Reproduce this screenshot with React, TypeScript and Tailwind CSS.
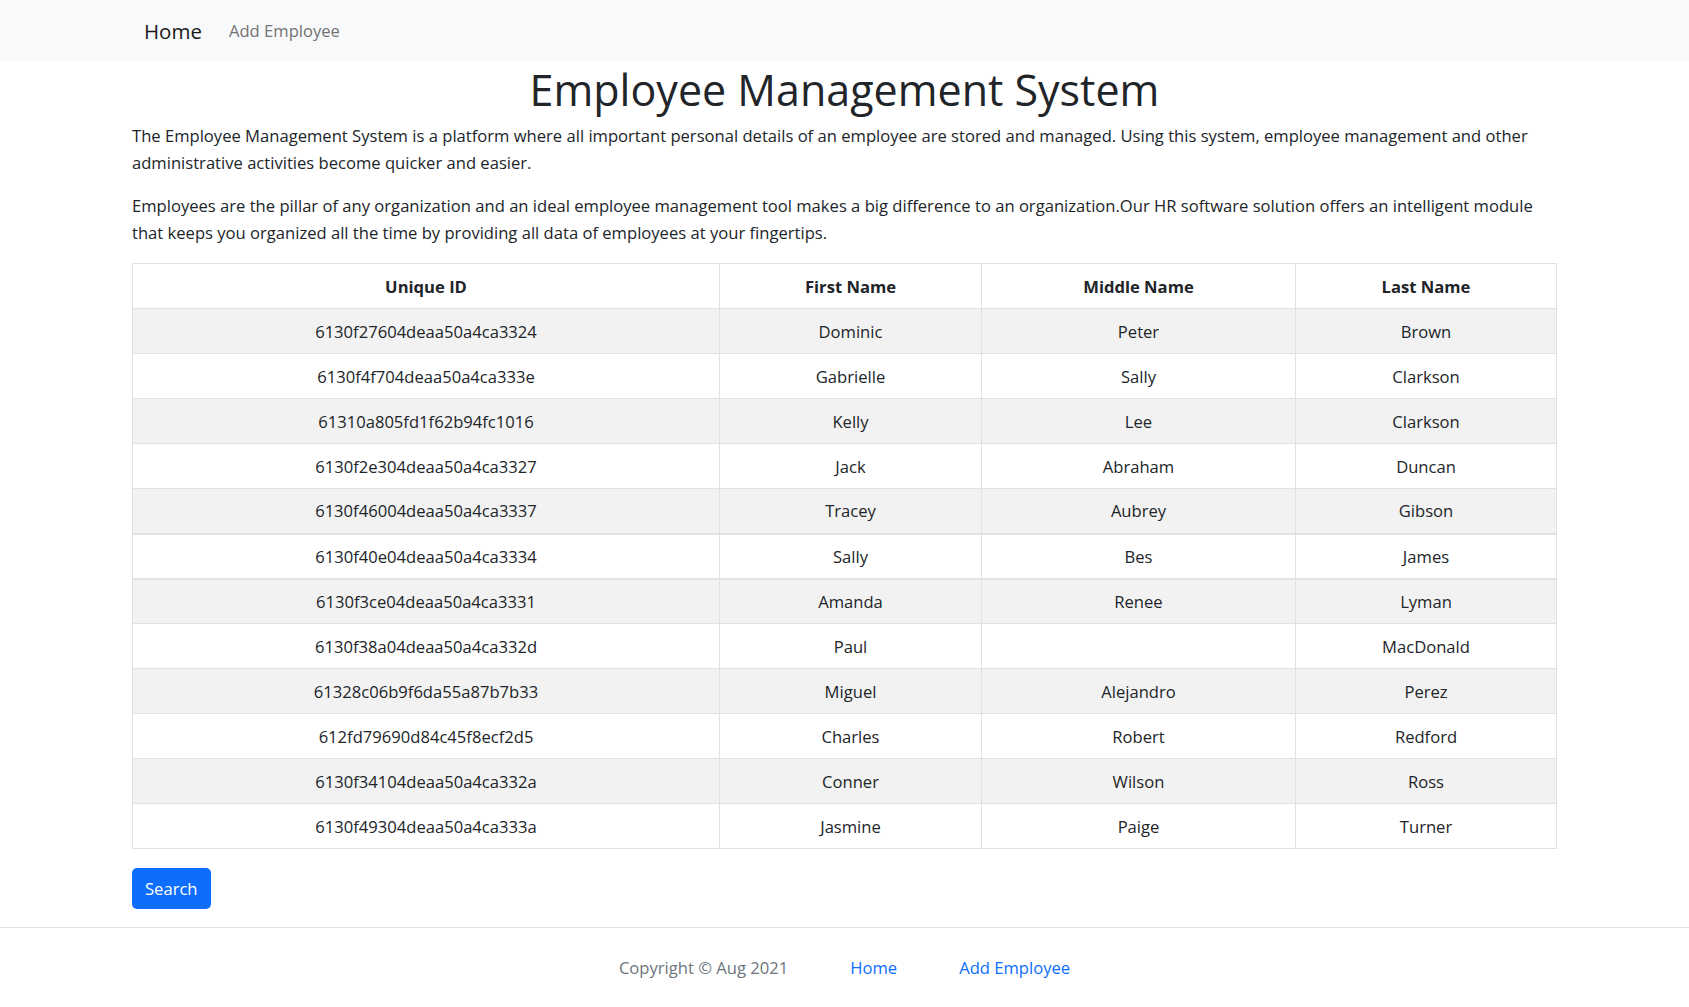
import { ReactNode } from 'react'

const ROWS = [
  ['6130f27604deaa50a4ca3324', 'Dominic', 'Peter', 'Brown'],
  ['6130f4f704deaa50a4ca333e', 'Gabrielle', 'Sally', 'Clarkson'],
  ['61310a805fd1f62b94fc1016', 'Kelly', 'Lee', 'Clarkson'],
  ['6130f2e304deaa50a4ca3327', 'Jack', 'Abraham', 'Duncan'],
  ['6130f46004deaa50a4ca3337', 'Tracey', 'Aubrey', 'Gibson'],
  ['6130f40e04deaa50a4ca3334', 'Sally', 'Bes', 'James'],
  ['6130f3ce04deaa50a4ca3331', 'Amanda', 'Renee', 'Lyman'],
  ['6130f38a04deaa50a4ca332d', 'Paul', '', 'MacDonald'],
  ['61328c06b9f6da55a87b7b33', 'Miguel', 'Alejandro', 'Perez'],
  ['612fd79690d84c45f8ecf2d5', 'Charles', 'Robert', 'Redford'],
  ['6130f34104deaa50a4ca332a', 'Conner', 'Wilson', 'Ross'],
  ['6130f49304deaa50a4ca333a', 'Jasmine', 'Paige', 'Turner'],
]

const HEAD = ['Unique ID', 'First Name', 'Middle Name', 'Last Name']

function Cell({ children, head, thick }: { children: ReactNode; head?: boolean; thick?: boolean }) {
  const base = `h-[45px] p-0 px-2 border border-[#dee2e6] text-center align-middle leading-[27px] ${
    thick ? 'border-y-2' : ''
  }`
  return head ? <th className={`${base} font-bold`}>{children}</th> : <td className={base}>{children}</td>
}

export default function App() {
  return (
    <div className="min-h-screen bg-white text-[#212529] font-['Open_Sans','Noto_Sans',sans-serif] text-[16.6px] leading-[27px]">
      {/* Top navbar */}
      <nav className="h-[61px] bg-[#f8f9fa]">
        <div className="mx-auto w-[1425px] h-full px-3 flex items-center">
          <a className="text-[20.5px] text-[#1a1a1a] mr-[27px] leading-[30px]">Home</a>
          <a className="text-[#737373]">Add Employee</a>
        </div>
      </nav>

      <main className="mx-auto w-[1425px]">
        <h1 className="mt-[4px] text-center text-[43px] leading-[49px] font-medium">Employee Management System</h1>
        <p className="mt-[8px] mb-4">
          The Employee Management System is a platform where all important personal details of an employee are stored
          and managed. Using this system, employee management and other administrative activities become quicker and
          easier.
        </p>
        <p className="mb-[17px]">
          Employees are the pillar of any organization and an ideal employee management tool makes a big difference to
          an organization.Our HR software solution offers an intelligent module that keeps you organized all the time
          by providing all data of employees at your fingertips.
        </p>

        <table className="w-full table-fixed border-collapse border border-[#dee2e6]">
          <colgroup>
            <col className="w-[587px]" />
            <col className="w-[262px]" />
            <col className="w-[314px]" />
            <col />
          </colgroup>
          <thead>
            <tr className="bg-white">
              {HEAD.map(h => (
                <Cell key={h} head>
                  {h}
                </Cell>
              ))}
            </tr>
          </thead>
          <tbody>
            {ROWS.map((r, i) => (
              <tr key={r[0]} className={i % 2 === 0 ? 'bg-[#f2f2f2]' : 'bg-white'}>
                {r.map((c, j) => (
                  <Cell key={j} thick={i === 5}>
                    {c}
                  </Cell>
                ))}
              </tr>
            ))}
          </tbody>
        </table>

        <button
          type="button"
          className="mt-[19px] mb-[18px] h-[41px] px-[13px] rounded-[5px] bg-[#0d6efd] text-white"
        >
          Search
        </button>
      </main>

      <footer className="border-t border-[#dee2e6] h-[80px] flex items-center justify-center gap-[62px]">
        <span className="text-[#6c757d]">Copyright © Aug 2021</span>
        <a className="text-[#0d6efd]">Home</a>
        <a className="text-[#0d6efd]">Add Employee</a>
      </footer>
    </div>
  )
}
